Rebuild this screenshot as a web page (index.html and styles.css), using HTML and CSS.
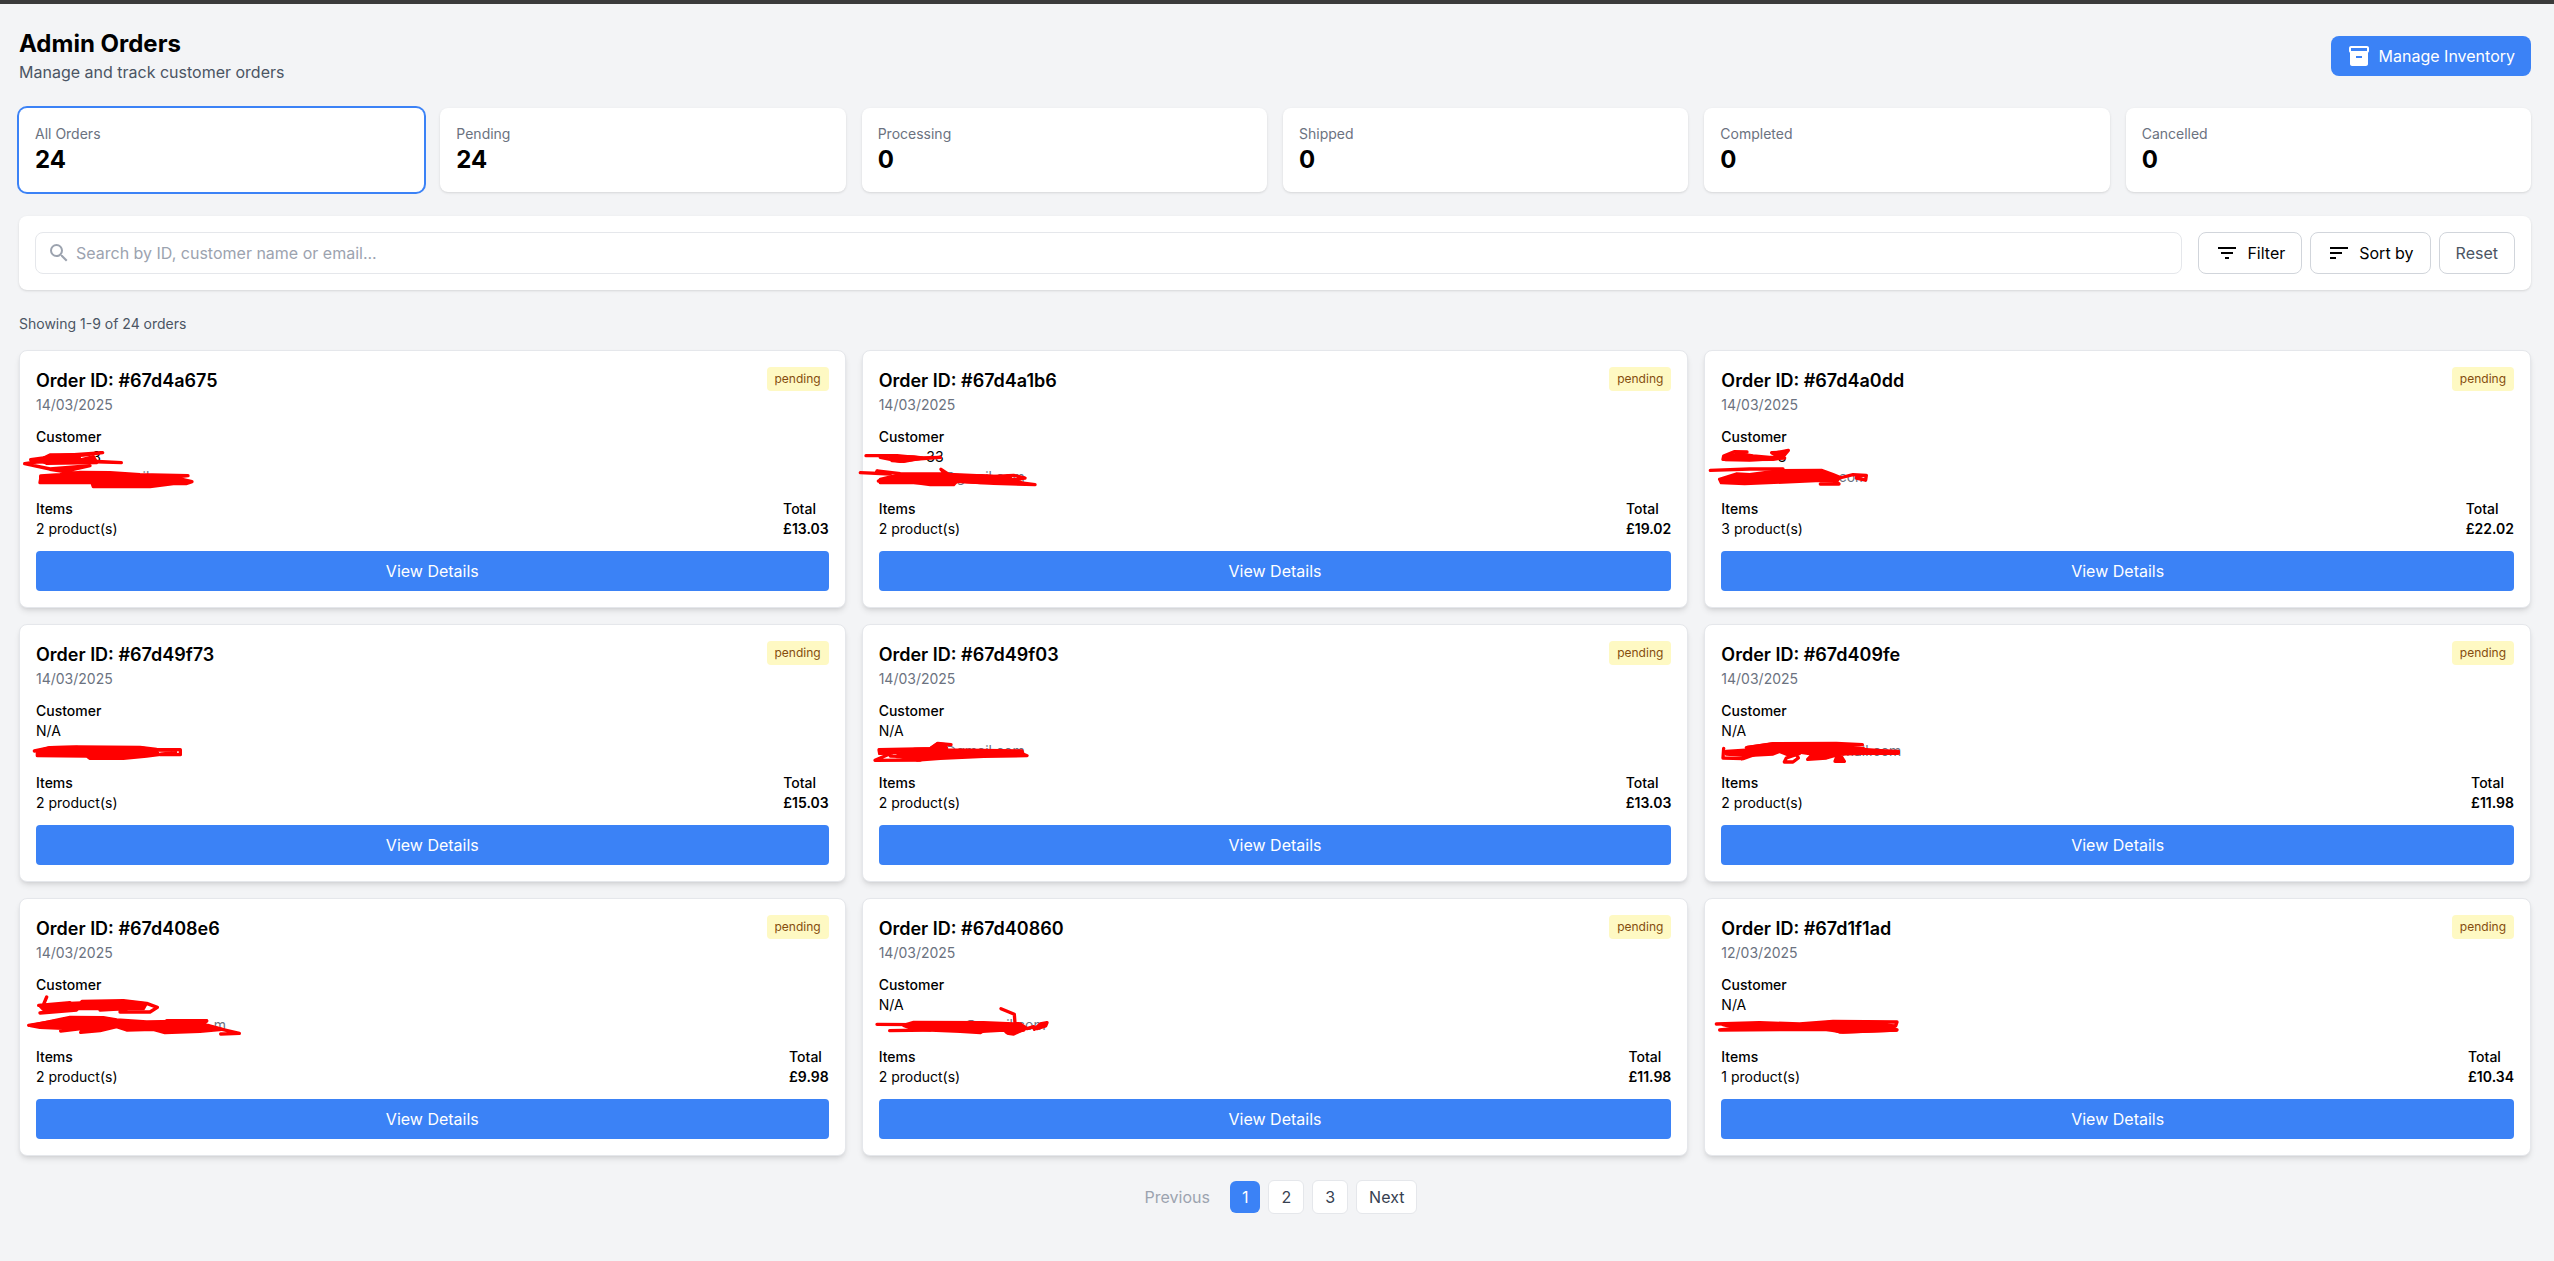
FILE: index.html
```html
<!DOCTYPE html>
<html lang="en">

<head>
  <meta charset="UTF-8">
  <meta name="viewport" content="width=device-width, initial-scale=1.0">
  <title>Admin Orders</title>
  <link rel="stylesheet" href="styles.css">
</head>

<body>
  <main class="page">
    <header class="header">
      <div>
        <h1 class="title">Admin Orders</h1>
        <p class="subtitle">Manage and track customer orders</p>
      </div>
      <button type="button" class="btn-inventory">
        <svg class="icon" viewBox="0 0 24 24"><path d="M20 2H4c-1 0-2 .9-2 2v3.01c0 .72.43 1.34 1 1.69V20c0 1.1 1.1 2 2 2h14c.9 0 2-.9 2-2V8.7c.57-.35 1-.97 1-1.69V4c0-1.1-1-2-2-2zm-5 12H9v-2h6v2zm5-7H4V4h16v3z"/></svg>
        Manage Inventory
      </button>
    </header>

    <section class="stats">
      <div class="stat active"><p class="stat-label">All Orders</p><p class="stat-value">24</p></div>
      <div class="stat"><p class="stat-label">Pending</p><p class="stat-value">24</p></div>
      <div class="stat"><p class="stat-label">Processing</p><p class="stat-value">0</p></div>
      <div class="stat"><p class="stat-label">Shipped</p><p class="stat-value">0</p></div>
      <div class="stat"><p class="stat-label">Completed</p><p class="stat-value">0</p></div>
      <div class="stat"><p class="stat-label">Cancelled</p><p class="stat-value">0</p></div>
    </section>

    <section class="toolbar">
      <div class="search">
        <svg class="icon search-icon" viewBox="0 0 24 24"><path d="M15.5 14h-.79l-.28-.27A6.471 6.471 0 0 0 16 9.5 6.5 6.5 0 1 0 9.5 16c1.61 0 3.09-.59 4.23-1.57l.27.28v.79l5 4.99L20.49 19l-4.99-5zm-6 0C7.01 14 5 11.99 5 9.5S7.01 5 9.5 5 14 7.01 14 9.5 11.99 14 9.5 14z"/></svg>
        <input type="text" class="search-input" aria-label="Search orders" placeholder="Search by ID, customer name or email...">
      </div>
      <div class="toolbar-actions">
        <button type="button" class="btn-tool">
          <svg class="icon" viewBox="0 0 24 24"><path d="M10 18h4v-2h-4v2zM3 6v2h18V6H3zm3 7h12v-2H6v2z"/></svg>
          Filter
        </button>
        <button type="button" class="btn-tool">
          <svg class="icon" viewBox="0 0 24 24"><path d="M3 18h6v-2H3v2zM3 6v2h18V6H3zm0 7h12v-2H3v2z"/></svg>
          Sort by
        </button>
        <button type="button" class="btn-tool reset">Reset</button>
      </div>
    </section>

    <p class="showing">Showing 1-9 of 24 orders</p>

    <section class="orders">
      <article class="order">
        <div class="order-head">
          <div><h2 class="order-id">Order ID: #67d4a675</h2><p class="order-date">14/03/2025</p></div>
          <span class="badge">pending</span>
        </div>
        <div class="customer">
          <p class="label">Customer</p>
          <div class="contact">
            <p class="masked-name">3</p>
            <p class="masked-email">mail.com</p>
            <svg class="scribble" viewBox="108 321 720 120">
              <path d="M92 359L180 347L308 338L250 345L130 354L250 362L364 368L240 364L110 366L74 371L150 387L270 377L220 388L150 388L240 402"/>
              <path class="fill" d="M120 360L150 345L235 344L240 360L280 350L290 368L140 370Z"/>
              <path class="fill" d="M122 408L180 404L240 397L330 398L420 404L564 407L520 412L576 425L558 431L520 431L450 440L280 440L276 428L120 428L122 417Z"/>
            </svg>
          </div>
        </div>
        <div class="summary">
          <div><p class="label">Items</p><p>2 product(s)</p></div>
          <div><p class="label">Total</p><p class="price">£13.03</p></div>
        </div>
        <button type="button" class="btn-details">View Details</button>
      </article>

      <article class="order">
        <div class="order-head">
          <div><h2 class="order-id">Order ID: #67d4a1b6</h2><p class="order-date">14/03/2025</p></div>
          <span class="badge">pending</span>
        </div>
        <div class="customer">
          <p class="label">Customer</p>
          <div class="contact">
            <p class="masked-name">33</p>
            <p class="masked-email">@gmail.com</p>
            <svg class="scribble" viewBox="536 321 720 120">
              <path d="M497 347L590 347L660 354L720 352L640 358L600 364L540 352M480 398L570 402L530 393L600 401L735 402L722 388L745 403L880 409L940 406L974 414L910 422L1004 434L880 430L770 423L760 434L690 434L640 427L534 423L590 408"/>
              <path class="fill" d="M570 349L640 351L665 354L610 364L575 362ZM540 418L600 404L740 406L850 408L930 412L900 418L960 426L840 428L770 424L700 430L640 427L540 428Z"/>
            </svg>
          </div>
        </div>
        <div class="summary">
          <div><p class="label">Items</p><p>2 product(s)</p></div>
          <div><p class="label">Total</p><p class="price">£19.02</p></div>
        </div>
        <button type="button" class="btn-details">View Details</button>
      </article>

      <article class="order">
        <div class="order-head">
          <div><h2 class="order-id">Order ID: #67d4a0dd</h2><p class="order-date">14/03/2025</p></div>
          <span class="badge">pending</span>
        </div>
        <div class="customer">
          <p class="label">Customer</p>
          <div class="contact">
            <p class="masked-name">3</p>
            <p class="masked-email">.com</p>
            <svg class="scribble" viewBox="244 321 720 120">
              <path d="M322 336L285 335L252 348L250 358L330 360L435 354L400 340L446 331L430 350M212 391L330 387L430 387M600 414L640 404L680 406L678 420L650 414M542 432L598 432L580 420"/>
              <path class="fill" d="M255 350L300 342L340 348L390 352L430 352L400 358L258 359ZM396 338L430 337L440 334L426 352ZM240 418L290 402L330 404L420 392L545 391L580 404L600 412L590 424L545 421L430 426L315 431L245 428Z"/>
            </svg>
          </div>
        </div>
        <div class="summary">
          <div><p class="label">Items</p><p>3 product(s)</p></div>
          <div><p class="label">Total</p><p class="price">£22.02</p></div>
        </div>
        <button type="button" class="btn-details">View Details</button>
      </article>

      <article class="order">
        <div class="order-head">
          <div><h2 class="order-id">Order ID: #67d49f73</h2><p class="order-date">14/03/2025</p></div>
          <span class="badge">pending</span>
        </div>
        <div class="customer">
          <p class="label">Customer</p>
          <div class="contact">
            <p>N/A</p>
            <p class="masked-email">m</p>
            <svg class="scribble" viewBox="108 303 720 120">
              <path d="M103 393L150 383L230 381L420 382L470 388L541 389L541 404L480 404L527 396L480 392"/>
              <path class="fill" d="M112 394L150 383L230 382L250 392L290 384L420 383L470 392L475 404L440 408L370 415L270 415L260 408L112 407Z"/>
            </svg>
          </div>
        </div>
        <div class="summary">
          <div><p class="label">Items</p><p>2 product(s)</p></div>
          <div><p class="label">Total</p><p class="price">£15.03</p></div>
        </div>
        <button type="button" class="btn-details">View Details</button>
      </article>

      <article class="order">
        <div class="order-head">
          <div><h2 class="order-id">Order ID: #67d49f03</h2><p class="order-date">14/03/2025</p></div>
          <span class="badge">pending</span>
        </div>
        <div class="customer">
          <p class="label">Customer</p>
          <div class="contact">
            <p>N/A</p>
            <p class="masked-email">@gmail.com</p>
            <svg class="scribble" viewBox="86 123 720 120">
              <path d="M302 194L262 190L240 206L86 209L88 220L130 217L74 241L210 240L150 229L120 228"/>
              <path class="fill" d="M88 209L190 208L240 206L262 192L285 194L290 210L515 213L518 222L530 227L400 229L270 235L200 240L190 232L140 230L150 215L88 220Z"/>
            </svg>
          </div>
        </div>
        <div class="summary">
          <div><p class="label">Items</p><p>2 product(s)</p></div>
          <div><p class="label">Total</p><p class="price">£13.03</p></div>
        </div>
        <button type="button" class="btn-details">View Details</button>
      </article>

      <article class="order">
        <div class="order-head">
          <div><h2 class="order-id">Order ID: #67d409fe</h2><p class="order-date">14/03/2025</p></div>
          <span class="badge">pending</span>
        </div>
        <div class="customer">
          <p class="label">Customer</p>
          <div class="contact">
            <p>N/A</p>
            <p class="masked-email wide">mail.com</p>
            <svg class="scribble" viewBox="64 123 720 120">
              <path d="M72 205L70 234L130 236L170 222L80 216L240 212L140 203L220 191L410 190L488 194L380 200L492 206L420 212L596 214L596 220L470 220M235 212L290 222L296 234L280 246L254 246L260 234L300 220"/>
              <path class="fill" d="M144 202L220 192L410 192L420 204L490 208L596 216L420 222L434 244L406 244L414 224L380 234L324 238L340 222L300 216L270 226L240 214L220 222L150 226L126 236L130 226L80 222L80 214L150 210Z"/>
            </svg>
          </div>
        </div>
        <div class="summary">
          <div><p class="label">Items</p><p>2 product(s)</p></div>
          <div><p class="label">Total</p><p class="price">£11.98</p></div>
        </div>
        <button type="button" class="btn-details">View Details</button>
      </article>

      <article class="order">
        <div class="order-head">
          <div><h2 class="order-id">Order ID: #67d408e6</h2><p class="order-date">14/03/2025</p></div>
          <span class="badge">pending</span>
        </div>
        <div class="customer">
          <p class="label">Customer</p>
          <div class="contact">
            <p class="masked-name">&nbsp;</p>
            <p class="masked-email widest">m</p>
            <svg class="scribble" viewBox="108 45 720 120">
              <path d="M140 51L130 75L116 76L210 68L190 86L120 99L230 90L246 64L370 62L440 70L472 82L450 96L360 96L380 86L300 90M86 136L160 124L240 118M620 122L500 122M662 162L718 160L640 142"/>
              <path class="fill" d="M122 80L210 70L260 68L370 64L438 72L430 86L240 86L130 88ZM92 137L160 123L210 112L310 113L350 120L440 126L620 123L610 132L666 148L600 154L495 158L460 148L380 150L350 140L300 152L242 157L250 145L182 153L190 145L120 142Z"/>
            </svg>
          </div>
        </div>
        <div class="summary">
          <div><p class="label">Items</p><p>2 product(s)</p></div>
          <div><p class="label">Total</p><p class="price">£9.98</p></div>
        </div>
        <button type="button" class="btn-details">View Details</button>
      </article>

      <article class="order">
        <div class="order-head">
          <div><h2 class="order-id">Order ID: #67d40860</h2><p class="order-date">14/03/2025</p></div>
          <span class="badge">pending</span>
        </div>
        <div class="customer">
          <p class="label">Customer</p>
          <div class="contact">
            <p>N/A</p>
            <p class="masked-email medium">@gmail.com</p>
            <svg class="scribble" viewBox="86 45 720 120">
              <path d="M452 86L492 103L494 130L510 132L530 146L550 140L552 148L570 132L590 128L586 138L560 146M80 133L190 134M118 152L240 150M470 158L520 150"/>
              <path class="fill" d="M160 136L190 127L400 128L490 132L524 146L490 162L474 160L460 150L396 154L390 158L330 154L240 150L180 144Z"/>
            </svg>
          </div>
        </div>
        <div class="summary">
          <div><p class="label">Items</p><p>2 product(s)</p></div>
          <div><p class="label">Total</p><p class="price">£11.98</p></div>
        </div>
        <button type="button" class="btn-details">View Details</button>
      </article>

      <article class="order">
        <div class="order-head">
          <div><h2 class="order-id">Order ID: #67d1f1ad</h2><p class="order-date">12/03/2025</p></div>
          <span class="badge">pending</span>
        </div>
        <div class="customer">
          <p class="label">Customer</p>
          <div class="contact">
            <p>N/A</p>
            <p class="masked-email wide">&nbsp;</p>
            <svg class="scribble" viewBox="64 45 720 120">
              <path d="M50 132L180 128L300 132L400 124L592 126L588 138L520 134L592 150L420 156L400 148L60 150L160 140"/>
              <path class="fill" d="M70 134L180 130L280 138L400 126L560 128L500 138L590 150L430 156L380 148L120 146Z"/>
            </svg>
          </div>
        </div>
        <div class="summary">
          <div><p class="label">Items</p><p>1 product(s)</p></div>
          <div><p class="label">Total</p><p class="price">£10.34</p></div>
        </div>
        <button type="button" class="btn-details">View Details</button>
      </article>
    </section>

    <nav class="pagination" aria-label="Pagination">
      <button type="button" class="page-btn disabled" disabled>Previous</button>
      <button type="button" class="page-btn current">1</button>
      <button type="button" class="page-btn">2</button>
      <button type="button" class="page-btn">3</button>
      <button type="button" class="page-btn">Next</button>
    </nav>
  </main>
</body>

</html>
```
FILE: styles.css
```css
* {
  margin: 0;
  padding: 0;
  box-sizing: border-box;
}

body {
  min-height: 100vh;
  background: #f3f4f6;
  border-top: 4px solid #3b3b3b;
  font-family: Inter, 'Liberation Sans', sans-serif;
  font-size: 16px;
  line-height: 24px;
  color: #000;
}

button,
input {
  font: inherit;
  color: inherit;
}

button {
  cursor: pointer;
  border: none;
}

.page {
  padding: 24px 23px 24px 19px;
}

.icon {
  width: 24px;
  height: 24px;
  fill: currentColor;
}

.header {
  display: flex;
  justify-content: space-between;
  align-items: center;
  margin-bottom: 24px;
}

.title {
  font-size: 24px;
  line-height: 32px;
  font-weight: 700;
}

.subtitle {
  color: #4b5563;
}

.btn-inventory {
  display: flex;
  align-items: center;
  gap: 8px;
  padding: 8px 16px;
  border-radius: 8px;
  background: #3b82f6;
  color: #fff;
}

/* Status counters */
.stats {
  display: grid;
  grid-template-columns: repeat(6, 1fr);
  gap: 16px;
  margin-bottom: 24px;
}

.stat {
  padding: 16px;
  border-radius: 8px;
  background: #fff;
  box-shadow: 0 1px 3px rgba(0, 0, 0, 0.1), 0 1px 2px -1px rgba(0, 0, 0, 0.1);
}

.stat.active {
  box-shadow: 0 0 0 2px #3b82f6;
}

.stat-label {
  font-size: 14px;
  line-height: 20px;
  color: #6b7280;
}

.stat-value {
  font-size: 24px;
  line-height: 32px;
  font-weight: 700;
}

/* Search and filters */
.toolbar {
  display: flex;
  gap: 16px;
  padding: 16px;
  margin-bottom: 24px;
  border-radius: 8px;
  background: #fff;
  box-shadow: 0 1px 3px rgba(0, 0, 0, 0.1), 0 1px 2px -1px rgba(0, 0, 0, 0.1);
}

.search {
  position: relative;
  flex: 1;
}

.search-icon {
  position: absolute;
  top: 9px;
  left: 12px;
  color: #9ca3af;
}

.search-input {
  display: block;
  width: 100%;
  height: 42px;
  padding: 8px 16px 8px 40px;
  border: 1px solid #e5e7eb;
  border-radius: 8px;
  background: #fff;
}

.search-input::placeholder {
  color: #9ca3af;
}

.toolbar-actions {
  display: flex;
  gap: 8px;
}

.btn-tool {
  display: flex;
  align-items: center;
  gap: 8px;
  padding: 8px 16px;
  border: 1px solid #d1d5db;
  border-radius: 8px;
  background: #fff;
}

.btn-tool.reset {
  color: #4b5563;
}

.showing {
  margin-bottom: 16px;
  font-size: 14px;
  line-height: 20px;
  color: #4b5563;
}

/* Order cards */
.orders {
  display: grid;
  grid-template-columns: repeat(3, 1fr);
  gap: 16px;
}

.order {
  padding: 16px;
  border: 1px solid #e5e7eb;
  border-radius: 8px;
  background: #fff;
  box-shadow: 0 4px 6px -1px rgba(0, 0, 0, 0.1), 0 2px 4px -2px rgba(0, 0, 0, 0.1);
  font-size: 14px;
  line-height: 20px;
}

.order-head {
  display: flex;
  justify-content: space-between;
  align-items: flex-start;
  margin-bottom: 12px;
}

.order-id {
  font-size: 18px;
  line-height: 28px;
  font-weight: 600;
}

.order-date {
  color: #6b7280;
}

.badge {
  padding: 4px 8px;
  border-radius: 4px;
  background: #fef9c3;
  color: #854d0e;
  font-size: 12px;
  line-height: 16px;
}

.customer {
  margin-bottom: 12px;
}

.label {
  font-weight: 500;
}

.contact {
  position: relative;
}

.masked-name {
  width: 65px;
  text-align: right;
}

.masked-email {
  width: 146px;
  text-align: right;
  color: #6b7280;
}

.masked-email.medium {
  width: 167px;
}

.masked-email.wide {
  width: 180px;
}

.masked-email.widest {
  width: 190px;
}

/* Pen strokes over the customer details */
.scribble {
  position: absolute;
  top: 0;
  left: 0;
  width: 240px;
  height: 40px;
  overflow: visible;
  fill: none;
  stroke: #f00;
  stroke-width: 10;
  stroke-linecap: round;
  stroke-linejoin: round;
}

.scribble .fill {
  fill: #f00;
}

.summary {
  display: flex;
  justify-content: space-between;
  margin-bottom: 12px;
}

.price {
  font-weight: 600;
}

.btn-details {
  display: block;
  width: 100%;
  padding: 8px 16px;
  border-radius: 4px;
  background: #3b82f6;
  color: #fff;
  font-size: 16px;
  line-height: 24px;
}

.pagination {
  display: flex;
  justify-content: center;
  align-items: center;
  gap: 8px;
  margin-top: 24px;
}

.page-btn {
  padding: 4px 12px;
  border: 1px solid #e5e7eb;
  border-radius: 6px;
  background: #fff;
  color: #374151;
}

.page-btn.current {
  border: none;
  background: #3b82f6;
  color: #fff;
}

.page-btn.disabled {
  border: none;
  background: none;
  color: #9ca3af;
  cursor: default;
}
```
